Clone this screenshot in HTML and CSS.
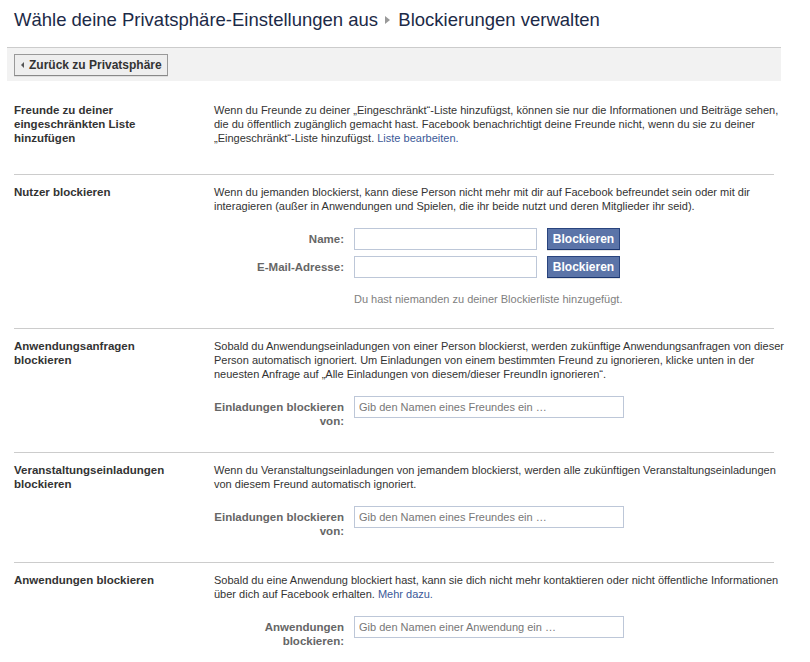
FILE: index.html
```html
<!DOCTYPE html>
<html lang="de">
<head>
<meta charset="utf-8">
<title>Blockierungen verwalten</title>
<link rel="stylesheet" href="styles.css">
</head>
<body>
<div class="page">
  <h1 class="title">Wähle deine Privatsphäre-Einstellungen aus <span class="crumb-arrow"></span> Blockierungen verwalten</h1>
  <div class="toolbar">
    <button class="back-btn" type="button"><span class="back-arrow"></span>Zurück zu Privatsphäre</button>
  </div>

  <div class="section first">
    <div class="sec-label">Freunde zu deiner eingeschränkten Liste hinzufügen</div>
    <div class="sec-body">
      <p class="desc">Wenn du Freunde zu deiner „Eingeschränkt“-Liste hinzufügst, können sie nur die Informationen und Beiträge sehen, die du öffentlich zugänglich gemacht hast. Facebook benachrichtigt deine Freunde nicht, wenn du sie zu deiner „Eingeschränkt“-Liste hinzufügst. <a href="#" class="link">Liste bearbeiten.</a></p>
    </div>
  </div>

  <div class="section with-note">
    <div class="sec-label">Nutzer blockieren</div>
    <div class="sec-body">
      <p class="desc">Wenn du jemanden blockierst, kann diese Person nicht mehr mit dir auf Facebook befreundet sein oder mit dir interagieren (außer in Anwendungen und Spielen, die ihr beide nutzt und deren Mitglieder ihr seid).</p>
      <div class="form">
        <div class="frow">
          <label class="flabel">Name:</label>
          <input class="finput short" type="text">
          <button class="blue-btn" type="button">Blockieren</button>
        </div>
        <div class="frow">
          <label class="flabel">E-Mail-Adresse:</label>
          <input class="finput short" type="text">
          <button class="blue-btn" type="button">Blockieren</button>
        </div>
        <p class="note">Du hast niemanden zu deiner Blockierliste hinzugefügt.</p>
      </div>
    </div>
  </div>

  <div class="section">
    <div class="sec-label">Anwendungsanfragen blockieren</div>
    <div class="sec-body">
      <p class="desc">Sobald du Anwendungseinladungen von einer Person blockierst, werden zukünftige Anwendungsanfragen von dieser Person automatisch ignoriert. Um Einladungen von einem bestimmten Freund zu ignorieren, klicke unten in der neuesten Anfrage auf „Alle Einladungen von diesem/dieser FreundIn ignorieren“.</p>
      <div class="form">
        <div class="frow">
          <label class="flabel">Einladungen blockieren<br>von:</label>
          <input class="finput long" type="text" placeholder="Gib den Namen eines Freundes ein …">
        </div>
      </div>
    </div>
  </div>

  <div class="section">
    <div class="sec-label">Veranstaltungseinladungen blockieren</div>
    <div class="sec-body">
      <p class="desc">Wenn du Veranstaltungseinladungen von jemandem blockierst, werden alle zukünftigen Veranstaltungseinladungen von diesem Freund automatisch ignoriert.</p>
      <div class="form">
        <div class="frow">
          <label class="flabel">Einladungen blockieren<br>von:</label>
          <input class="finput long" type="text" placeholder="Gib den Namen eines Freundes ein …">
        </div>
      </div>
    </div>
  </div>

  <div class="section">
    <div class="sec-label">Anwendungen blockieren</div>
    <div class="sec-body">
      <p class="desc">Sobald du eine Anwendung blockiert hast, kann sie dich nicht mehr kontaktieren oder nicht öffentliche Informationen über dich auf Facebook erhalten. <a href="#" class="link">Mehr dazu.</a></p>
      <div class="form">
        <div class="frow">
          <label class="flabel">Anwendungen<br>blockieren:</label>
          <input class="finput long" type="text" placeholder="Gib den Namen einer Anwendung ein …">
        </div>
      </div>
    </div>
  </div>
</div>
</body>
</html>
```

FILE: styles.css
```css
html, body {
  margin: 0;
  padding: 0;
  background: #fff;
}
body {
  font-family: "Liberation Sans", Arial, sans-serif;
  font-size: 11px;
  color: #333;
}
.page {
  width: 774px;
  margin-left: 7px;
}
.title {
  margin: 0;
  padding: 10px 7px 0;
  height: 30px;
  box-sizing: border-box;
  font-size: 18.5px;
  font-weight: normal;
  color: #1c2a47;
  line-height: 20px;
  white-space: nowrap;
}
.crumb-arrow {
  display: inline-block;
  width: 0;
  height: 0;
  border-left: 5px solid #999;
  border-top: 4px solid transparent;
  border-bottom: 4px solid transparent;
  margin: 0 3px 2px 2px;
  vertical-align: middle;
}
.toolbar {
  margin-top: 17px;
  border-top: 1px solid #ccc;
  background: #f2f2f2;
  padding: 6px 7px 6px;
  height: 34px;
  box-sizing: border-box;
}
.back-btn {
  font-family: "Liberation Sans", Arial, sans-serif;
  font-size: 12px;
  font-weight: bold;
  color: #333;
  background: #eee;
  border: 1px solid #999;
  border-bottom-color: #888;
  height: 22px;
  padding: 0 5px 0 6px;
  display: inline-flex;
  align-items: center;
  box-shadow: 0 1px 0 rgba(0,0,0,0.08);
  cursor: pointer;
}
.back-arrow {
  display: inline-block;
  width: 0;
  height: 0;
  border-right: 3px solid #555;
  border-top: 3px solid transparent;
  border-bottom: 3px solid transparent;
  margin-right: 5px;
}
.section {
  display: flex;
  margin: 0 7px;
  border-top: 1px solid #ccc;
  padding: 10px 0 24px;
}
.section.with-note {
  padding-bottom: 22px;
}
.section.first {
  border-top: none;
  padding: 22px 0 29px;
}
.sec-label {
  width: 200px;
  flex: none;
  font-weight: bold;
  font-size: 11.5px;
  line-height: 14px;
  color: #333;
  padding-right: 30px;
  box-sizing: border-box;
}
.sec-body {
  flex: 1;
}
.desc {
  margin: 0;
  line-height: 14px;
  width: 572px;
}
.link {
  color: #3b5998;
  text-decoration: none;
}
.form {
  margin-top: 15px;
  display: flex;
  flex-direction: column;
  gap: 6px;
}
.frow {
  display: flex;
  align-items: flex-start;
}
.flabel {
  width: 130px;
  flex: none;
  text-align: right;
  font-weight: bold;
  font-size: 11.5px;
  color: #666;
  line-height: 14px;
  padding-top: 4px;
  margin-right: 10px;
}
.finput {
  height: 22px;
  box-sizing: border-box;
  border: 1px solid #bdc7d8;
  padding: 2px 4px 3px;
  font-family: "Liberation Sans", Arial, sans-serif;
  font-size: 11px;
  color: #333;
  outline: none;
  margin: 0;
}
.finput::placeholder {
  color: #777;
}
.finput.short {
  width: 183px;
}
.finput.long {
  width: 270px;
}
.blue-btn {
  margin-left: 10px;
  height: 22px;
  width: 73px;
  box-sizing: border-box;
  background: #5b74a8;
  border: 1px solid #29447e;
  border-bottom-color: #1a356e;
  color: #fff;
  font-family: "Liberation Sans", Arial, sans-serif;
  font-weight: bold;
  font-size: 12px;
  padding: 0;
  box-shadow: 0 1px 0 rgba(0,0,0,0.1);
  cursor: pointer;
}
.note {
  margin: 8px 0 0 140px;
  color: #808080;
  line-height: 14px;
}
```
